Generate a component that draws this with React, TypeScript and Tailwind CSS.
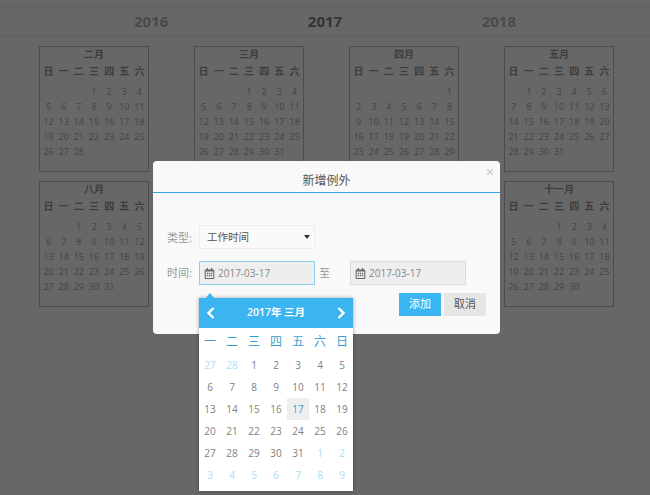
import React from 'react';
import { FaRegCalendarAlt } from 'react-icons/fa';

const FONT = '"Open Sans", "Noto Sans CJK SC", sans-serif';

const WEEK_BG = ['日', '一', '二', '三', '四', '五', '六'];
const WEEK_PICKER = ['一', '二', '三', '四', '五', '六', '日'];

// 九月 and 十月 sit fully behind the dialog, so they stay empty
const MONTHS = [
  { name: '二月', blanks: 3, days: 28 },
  { name: '三月', blanks: 3, days: 31 },
  { name: '四月', blanks: 6, days: 30 },
  { name: '五月', blanks: 1, days: 31 },
  { name: '八月', blanks: 2, days: 31 },
  null,
  null,
  { name: '十一月', blanks: 3, days: 30 },
];

// March 2017 as the picker shows it, with the spill-over days of the other months
const PICKER_DAYS = [
  ...[27, 28].map((d) => ({ d, off: true })),
  ...Array.from({ length: 31 }, (_, i) => ({ d: i + 1, off: false })),
  ...[1, 2, 3, 4, 5, 6, 7, 8, 9].map((d) => ({ d, off: true })),
];

function MonthCard({ name, blanks, days }: { name: string; blanks: number; days: number }) {
  return (
    <div className="h-[126px] border border-[#4c4c4c] px-px">
      <div className="h-[15px] text-center text-[10px] leading-[14px] font-bold text-[#3d3d3d]">{name}</div>
      <div className="grid h-[19px] grid-cols-7 items-center pb-[1px] text-center text-[10px] leading-[14px] font-bold text-[#3d3d3d]">
        {WEEK_BG.map((w) => (
          <span key={w}>{w}</span>
        ))}
      </div>
      <div className="mt-[3px] grid grid-cols-7 text-center text-[9px] leading-[15px] text-[#444444]">
        {Array.from({ length: blanks }, (_, i) => (
          <span key={`b${i}`} />
        ))}
        {Array.from({ length: days }, (_, i) => (
          <span key={i}>{i + 1}</span>
        ))}
      </div>
    </div>
  );
}

function Chevron({ right }: { right?: boolean }) {
  return (
    <svg width="8" height="12" viewBox="0 0 8 12" fill="none" stroke="currentColor" strokeWidth="2.4">
      <path d={right ? 'M1.5 1 L6.5 6 L1.5 11' : 'M6.5 1 L1.5 6 L6.5 11'} />
    </svg>
  );
}

function DatePicker() {
  return (
    <div className="absolute top-[137px] left-[46px] w-[154px] bg-white shadow-[0_0_4px_rgba(0,0,0,0.35)]">
      <div className="absolute -top-[5px] left-[7px] h-0 w-0 border-x-[4px] border-b-[5px] border-x-transparent border-b-[#3bb4f2]" />
      <div className="flex h-[30px] items-center justify-between bg-[#3bb4f2] px-[8px] text-white">
        <Chevron />
        <span className="text-[10.5px] font-semibold">2017年 三月</span>
        <Chevron right />
      </div>
      <div className="grid h-[26px] grid-cols-7 items-center pt-[1px] text-center text-[12px] text-[#3a9fd0]">
        {WEEK_PICKER.map((w) => (
          <span key={w}>{w}</span>
        ))}
      </div>
      <div className="grid grid-cols-7 pb-[5px] text-center text-[10px] leading-[22px] text-[#808080]">
        {PICKER_DAYS.map(({ d, off }, i) => (
          <span
            key={i}
            className={off ? 'text-[#a9def7]' : d === 17 ? 'bg-[#eeeeee] text-[#3a9fd0]' : ''}
          >
            {d}
          </span>
        ))}
      </div>
    </div>
  );
}

function DateInput({ active }: { active?: boolean }) {
  return (
    <div
      className={`flex h-6 w-[116px] items-center gap-[3px] border bg-[#eeeeee] pl-[4px] text-[10px] text-[#888888] ${
        active ? 'border-[#86cff0]' : 'border-[#dddddd]'
      }`}
    >
      <FaRegCalendarAlt size={11} className="text-[#666]" />
      <span>2017-03-17</span>
    </div>
  );
}

function Modal() {
  return (
    <div className="absolute top-[161px] left-[153px] h-[173px] w-[347px] rounded-[4px] bg-[#f9f9f9] text-[#555]">
      <div className="relative h-[32px] border-b border-[#2ea9ec] pt-[11px] text-center text-[12px] leading-[18px]">
        新增例外
        <span className="absolute top-[4px] right-[6px] text-[14px] leading-[14px] text-[#c4c4c4]">×</span>
      </div>
      <div className="pt-[32px] pl-[14px]">
        <div className="flex items-center">
          <span className="w-[32px] pt-[2px] text-[11px] text-[#999]">类型:</span>
          <div className="flex h-6 w-[116px] items-center justify-between border border-[#eeeeee] bg-[#fafafa] pr-[4px] pl-[7px] text-[10.5px] text-[#555]">
            <span className="pt-[2px]">工作时间</span>
            <span className="h-0 w-0 border-x-[3.5px] border-t-[4px] border-x-transparent border-t-[#333]" />
          </div>
        </div>
        <div className="mt-3 flex items-center">
          <span className="w-[32px] text-[11px] text-[#999]">时间:</span>
          <DateInput active />
          <span className="w-[35px] pl-[4px] text-[11px] text-[#999]">至</span>
          <DateInput />
        </div>
        <div className="mt-2 flex justify-end gap-[3px] pr-[14px] text-[11px]">
          <button className="h-[23px] w-[42px] bg-[#3bb4f2] text-white">添加</button>
          <button className="h-[23px] w-[42px] bg-[#e6e6e6] text-[#555]">取消</button>
        </div>
      </div>
      <DatePicker />
    </div>
  );
}

export default function App() {
  return (
    <div className="relative h-[495px] w-[650px] overflow-hidden bg-[#676767]" style={{ fontFamily: FONT }}>
      <div className="mt-[6px] flex h-[31px] items-center justify-center gap-[139.5px] border-y border-[#5d5d5d] text-[15px] font-bold">
        <span className="text-[#4a4a4a]">2016</span>
        <span className="text-[#333333]">2017</span>
        <span className="text-[#4a4a4a]">2018</span>
      </div>
      <div className="mt-[9px] grid grid-cols-[repeat(4,110px)] gap-x-[45px] gap-y-[9px] pl-[39px]">
        {MONTHS.map((m, i) => (m ? <MonthCard key={m.name} {...m} /> : <div key={i} className="h-[126px]" />))}
      </div>
      <Modal />
    </div>
  );
}
